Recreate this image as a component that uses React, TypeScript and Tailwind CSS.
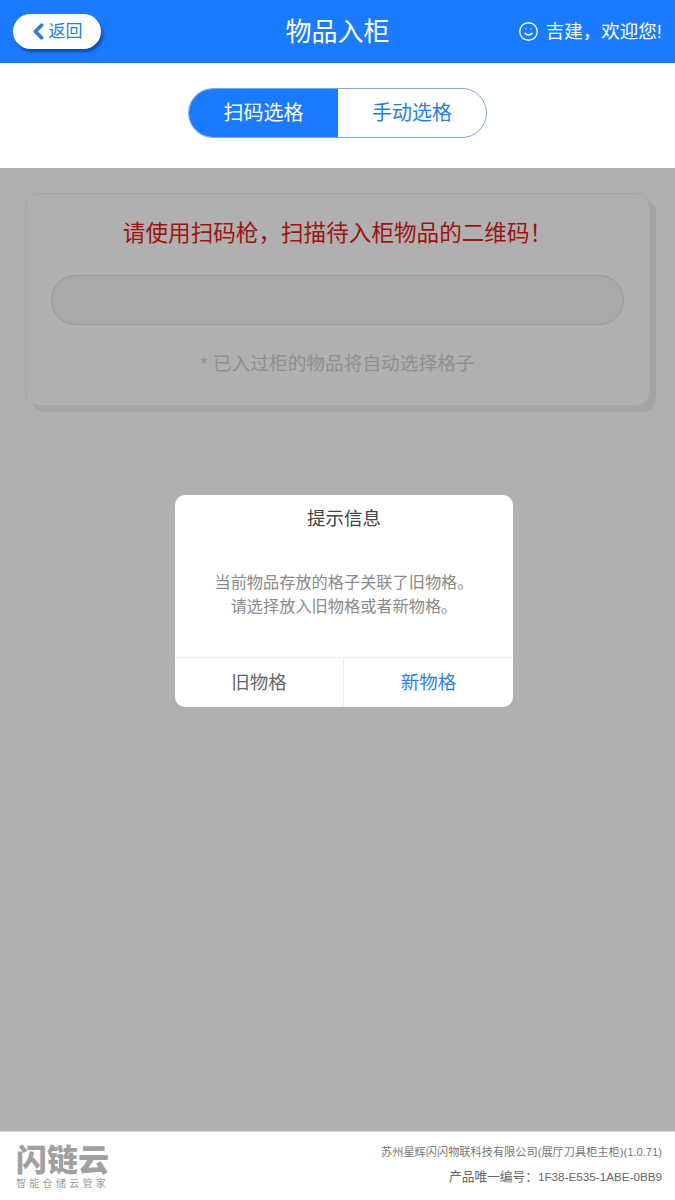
import { ChevronLeft, Smile } from "lucide-react";

const CJK = "font-['Liberation_Sans','Noto_Sans_CJK_SC',sans-serif]";

/** Экран «物品入柜» с открытым диалогом выбора格子. */
export default function App() {
  return (
    <div className={`flex h-[1200px] w-[675px] flex-col overflow-hidden bg-white ${CJK}`}>
      <header className="flex h-[63px] shrink-0 items-center justify-between bg-[#1a7bff] pl-[13px] pr-[13px]">
        <div className="flex w-[200px]">
          <button className="flex h-[35px] w-[88px] items-center justify-center rounded-full bg-white text-[17px] text-[#2b7de0] shadow-[2px_3px_3px_rgba(0,40,110,0.55)]">
            <ChevronLeft size={25} strokeWidth={3.5} className="-ml-[6px] -mr-[2px]" />
            返回
          </button>
        </div>
        <h1 className="text-[26px] leading-none text-white">物品入柜</h1>
        <div className="flex w-[200px] items-center justify-end gap-[7px] text-[18.5px] text-white">
          <Smile size={21} strokeWidth={1.5} />
          <span>吉建，欢迎您!</span>
        </div>
      </header>

      <div className="flex h-[105px] shrink-0 items-start justify-center pt-[25px]">
        <div className="flex h-[50px] w-[299px] overflow-hidden rounded-full border border-[#7fa8e0] text-[20px]">
          <div className="flex w-[149px] items-center justify-center bg-[#1a7bff] text-white">扫码选格</div>
          <div className="flex flex-1 items-center justify-center text-[#2b7de0]">手动选格</div>
        </div>
      </div>

      <main className="relative flex-1 bg-[#fcfcfc] px-[25px] pt-[25px]">
        <section className="flex h-[213px] w-[625px] flex-col items-center rounded-[14px] border border-[#efefef] bg-[#fcfcfc] px-[25px] shadow-[6px_6px_0_#ebebeb]">
          <p className="mt-[24px] whitespace-nowrap text-[22.6px] leading-[32px] text-[#e31a1a]">请使用扫码枪，扫描待入柜物品的二维码！</p>
          <div className="mt-[25px] h-[50px] w-full rounded-full border border-[#dcdcdc] bg-[#f2f2f2]" />
          <p className="mt-[25px] text-[18.7px] leading-[28px] text-[#cdcdcd]">* 已入过柜的物品将自动选择格子</p>
        </section>

        <div className="absolute inset-0 flex flex-col items-center bg-black/30 pl-[13px] pt-[327px]">
          <div className="flex h-[212px] w-[338px] flex-col rounded-[10px] bg-white">
            <h2 className="mt-[10px] text-center text-[18.5px] leading-[28px] text-[#444]">提示信息</h2>
            <div className="mt-[37px] flex-1 text-center text-[16.2px] leading-[24px] text-[#8a8a8a]">
              <p>当前物品存放的格子关联了旧物格。</p>
              <p>请选择放入旧物格或者新物格。</p>
            </div>
            <div className="flex h-[50px] border-t border-[#eeeeee] text-[18.5px]">
              <button className="w-[169px] border-r border-[#eeeeee] text-[#666]">旧物格</button>
              <button className="flex-1 text-[#2f80e0]">新物格</button>
            </div>
          </div>
        </div>
      </main>

      <footer className="flex h-[69px] shrink-0 justify-between border-t border-[#dddddd] bg-white pl-[16px] pr-[13px]">
        <div className="flex flex-col pt-[12px]">
          <span className="text-[31px] font-black leading-[33px] text-[#a0a0a0]">闪链云</span>
          <span className="mt-[1px] text-[10px] leading-[12px] tracking-[3.3px] text-[#999]">智能仓储云管家</span>
        </div>
        <div className="flex flex-col items-end pt-[11px] text-right">
          <span className="text-[11.2px] leading-[18px] text-[#777]">苏州星辉闪闪物联科技有限公司(展厅刀具柜主柜)(1.0.71)</span>
          <span className="mt-[7px] text-[12.7px] leading-[18px] text-[#666]">
            产品唯一编号：<span className="text-[11.7px]">1F38-E535-1ABE-0BB9</span>
          </span>
        </div>
      </footer>
    </div>
  );
}
